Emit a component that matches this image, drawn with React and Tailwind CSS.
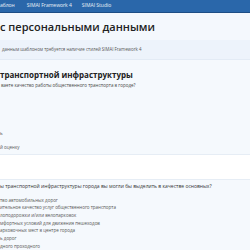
import React from "react";

const options = [
  "тво автомобильных дорог",
  "ительное качество услуг общественного транспорта",
  "лоподорожки и/или велопарковок",
  "мфортных условий для движения пешеходов",
  "арковочных мест в центре города",
  "ь дорог",
  "дного проходного",
];

export default function App() {
  return (
    <div
      className="w-[250px] h-[250px] overflow-hidden bg-white text-[#222]"
      style={{ fontFamily: '"Open Sans", "Liberation Sans", sans-serif' }}
    >
      <nav className="h-[13px] bg-[#2a67aa] border-b border-[#1d4d85] flex items-center gap-[9px] text-[5px] text-white/90 whitespace-nowrap">
        <span>аблон</span>
        <span className="ml-[3px]">SIMAI Framework 4</span>
        <span className="ml-[1px]">SIMAI Studio</span>
      </nav>

      <header className="bg-[#f4f8fd] h-[27px] flex items-center">
        <h1 className="text-[11px] font-semibold whitespace-nowrap leading-none">
          с персональными данными
        </h1>
      </header>
      <div className="bg-[#edf3fb] h-[20px] flex items-center border-b border-[#e3ebf5]">
        <p className="ml-[2px] text-[4.4px] text-[#555] whitespace-nowrap">
          данным шаблоном требуется наличие стилей SIMAI Framework 4
        </p>
      </div>

      <section className="bg-[#f5f9fd] h-[95px] pt-[9px] border-b border-[#e6edf5]">
        <h2 className="text-[8px] font-bold whitespace-nowrap leading-[12px]">
          транспортной инфраструктуры
        </h2>
        <p className="ml-[1px] mt-[1px] text-[4.5px] text-[#444] whitespace-nowrap">
          ваете качество работы общественного транспорта в городе?
        </p>
        <div className="mt-[41px] flex flex-col gap-[7px] text-[4.5px] text-[#555] whitespace-nowrap">
          <span>ь</span>
          <span>й оценку</span>
        </div>
      </section>

      <div className="h-[24px] bg-white" />

      <section className="bg-[#f5f9fd] border-t border-[#e6edf5] pt-[3px] h-[80px]">
        <p className="text-[5px] text-[#333] whitespace-nowrap">
          ы транспортной инфраструктуры города вы могли бы выделить в качестве основных?
        </p>
        <ul className="mt-[6px] flex flex-col gap-[1.2px] text-[4.5px] text-[#555] whitespace-nowrap leading-[6.5px]">
          {options.map((o) => (
            <li key={o}>{o}</li>
          ))}
        </ul>
      </section>
    </div>
  );
}
